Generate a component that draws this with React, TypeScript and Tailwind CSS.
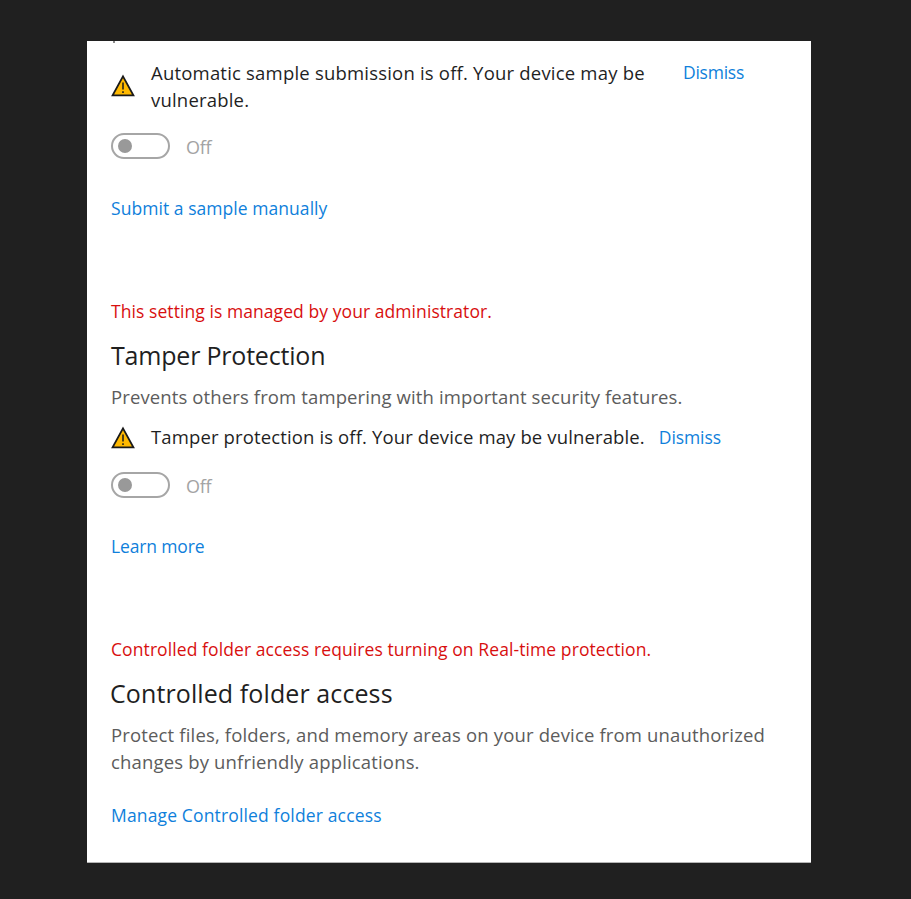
const font = "[font-family:'Open_Sans',sans-serif]"

function WarnIcon() {
  return (
    <svg width="24" height="24" viewBox="0 0 24 24" className="shrink-0">
      <path d="M12 2.4 L22.4 21.4 H1.6 Z" fill="#ffb900" stroke="#1a1a1a" strokeWidth="1.8" strokeLinejoin="miter" />
      <path d="M12 8.5 V15.5" stroke="#1a1a1a" strokeWidth="1.5" />
      <path d="M12 17.2 V19" stroke="#1a1a1a" strokeWidth="1.5" />
    </svg>
  )
}

function Toggle() {
  return (
    <div className="flex items-center h-[26px]">
      <div className="w-[59px] h-[26px] rounded-full border-[2.5px] border-[#a6a6a6] flex items-center pl-[5px]">
        <div className="w-[14px] h-[14px] rounded-full bg-[#999999]" />
      </div>
      <span className="ml-4 mt-px text-[18px] leading-[26px] tracking-[-0.3px] text-[#a3a3a3]">Off</span>
    </div>
  )
}

export default function App() {
  return (
    <div className={`w-[911px] h-[899px] bg-[#202020] pt-[41px] pl-[87px] overflow-hidden ${font}`}>
      <div className="w-[724px] h-[822px] bg-white pl-6 border-b border-[#b5b5b5] overflow-hidden">
        {/* bottom of a line cut off by the scroll */}
        <div className="ml-[2px] w-[2px] h-[2px] bg-[#8a8a8a]" />
        {/* Automatic sample submission */}
        <div className="flex pt-[16px] w-[640px]">
          <div className="pt-[15px]"><WarnIcon /></div>
          <p className="ml-4 w-[510px] text-[18.5px] leading-[27px] tracking-[0.2px] text-[#1f1f1f]">
            Automatic sample submission is off. Your device may be vulnerable.
          </p>
          <a className="ml-[22px] text-[17.5px] leading-[26px] tracking-[-0.25px] text-[#0f7fdb]">Dismiss</a>
        </div>
        <div className="mt-[20px]"><Toggle /></div>
        <a className="block mt-[36px] text-[17.5px] leading-[26px] tracking-[0.05px] text-[#0f7fdb]">Submit a sample manually</a>

        {/* Tamper Protection */}
        <p className="mt-[77px] text-[17.5px] leading-[26px] tracking-[0.07px] text-[#d80f0f]">This setting is managed by your administrator.</p>
        <h2 className="mt-[13px] text-[25px] leading-[36px] tracking-[-0.2px] text-[#1f1f1f]">Tamper Protection</h2>
        <p className="mt-[10px] text-[18.5px] leading-[27px] tracking-[0.12px] text-[#5c5c5c]">Prevents others from tampering with important security features.</p>
        <div className="flex items-center mt-[13px]">
          <WarnIcon />
          <p className="ml-4 mb-[2px] text-[18.5px] leading-[27px] tracking-[0.13px] text-[#1f1f1f]">Tamper protection is off. Your device may be vulnerable.</p>
          <a className="ml-[14px] mb-[2px] text-[17.5px] leading-[26px] tracking-[-0.1px] text-[#0f7fdb]">Dismiss</a>
        </div>
        <div className="mt-[20px]"><Toggle /></div>
        <a className="block mt-[35px] text-[17.5px] leading-[26px] tracking-[-0.15px] text-[#0f7fdb]">Learn more</a>

        {/* Controlled folder access */}
        <p className="mt-[77px] text-[17.5px] leading-[26px] tracking-[0.09px] text-[#d80f0f]">Controlled folder access requires turning on Real-time protection.</p>
        <h2 className="mt-[13px] -ml-px text-[25px] leading-[36px] tracking-[0.1px] text-[#1f1f1f]">Controlled folder access</h2>
        <p className="mt-[10px] w-[670px] text-[18.5px] leading-[27px] tracking-[0.16px] text-[#5c5c5c]">
          Protect files, folders, and memory areas on your device from unauthorized changes by unfriendly applications.
        </p>
        <a className="block mt-[27px] text-[17.5px] leading-[26px] tracking-[0.15px] text-[#0f7fdb]">Manage Controlled folder access</a>
      </div>
    </div>
  )
}
